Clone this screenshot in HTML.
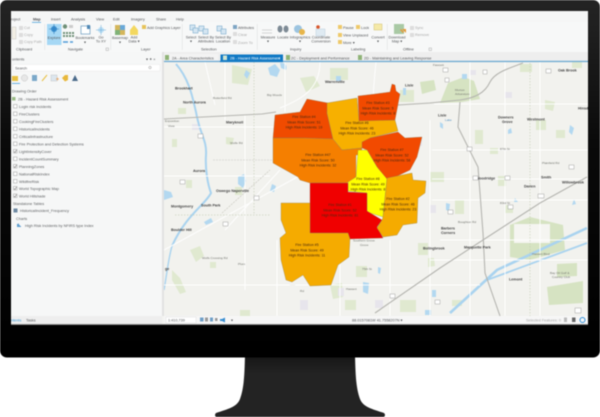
<!DOCTYPE html>
<html><head><meta charset="utf-8"><style>
html,body{margin:0;padding:0;background:#fff;width:600px;height:417px;overflow:hidden}
svg{display:block;position:absolute;left:0;top:0}
text{font-family:"Liberation Sans",sans-serif}
.ui{filter:blur(.6px)}
.t{font-size:3.8px;fill:#55575a}
.l{font-size:3.8px;fill:#5c5e60}
.m{font-size:3.1px;fill:#73756f}
.b{font-size:3.7px;fill:#444;font-weight:bold}
.f{font-size:3.6px;fill:#4a2a10;text-anchor:middle}
.c{text-anchor:middle}
.box{fill:#fff;stroke:#9a9a9a;stroke-width:.5}
.rd{fill:none;stroke:#fff;stroke-width:1}
.hw{fill:none;stroke:#b5b5b0;stroke-width:1.1}
.gr{fill:#e0e9d0}
.g2{fill:#d6e3c2}
.wa{fill:#b3d8f0}
</style></head><body>
<svg width="600" height="417" viewBox="0 0 600 417" xmlns="http://www.w3.org/2000/svg">
<defs>
<linearGradient id="bz" x1="0" y1="0" x2="0" y2="1"><stop offset="0" stop-color="#242424"/><stop offset=".1" stop-color="#1e1e1e"/><stop offset=".4" stop-color="#0a0a0a"/><stop offset="1" stop-color="#000"/></linearGradient>
<linearGradient id="st" x1="0" y1="0" x2="0" y2="1"><stop offset="0" stop-color="#161616"/><stop offset=".3" stop-color="#232323"/><stop offset="1" stop-color="#232323"/></linearGradient>
</defs>
<rect width="600" height="417" fill="#fff"/>
<path class="ui" d="M245 355H355C355.500 375 356 388 360 399C363 407 372 409 384 413Q386 415 384 417H216Q214 415 216 413C228 409 237 407 240 399C244 388 244.500 375 245 355Z" fill="url(#st)"/>
<rect class="ui" x="0" y="0" width="600" height="357.500" rx="7" fill="url(#bz)"/>

<g class="ui">
<!-- map -->
<rect x="11" y="11" width="577" height="313" fill="#f4f4f1"/>
<rect x="164" y="62" width="424" height="254" fill="#f2f2ee"/>
<g>
<!-- green patches -->
<path class="g2" d="M440 103l8-20 16-6 10 4 6 18-18 3zM420 82l14-2 2 10-14 4zM510 257V225l20-8 33 8 2 25-35 10zM547 287l36-6v22l-34 2zM557 264l20-1v13l-20 1z"/>
<rect x="514" y="224" width="36" height="19" fill="#f5f5f1"/>
<path class="gr" d="M300 78l14-2 6 10-14 6zM330 68h18v12h-18zM232 65l20 4-4 16-16-2zM178 108h8v6h-8zM172 139h5v8h-5zM226 137l8 1-2 7-6-1zM520 64h12v8h-12zM545 100l10 2-2 9-8-2zM556 130h9v8h-9zM536 120h10v10h-10zM455 200h9v14h-9zM430 172h14v10h-14zM498 176h8v10h-8zM475 130h8v14h-8zM490 148h8v6h-8zM505 205h8v8h-8zM418 243h10v12h-10zM356 266h11v11h-11zM345 300h11v10h-11zM400 300h16v12h-16zM330 285l12-2 1 14-10 2zM186 180h6v8h-6zM235 187h7v8h-7zM190 250l10-4 4 10-8 6zM172 270l8 8 6 14-6 2-8-14zM210 262h6v6h-6zM428 258l6 0 1 8-7 1zM240 310h10v6h-10zM452 300h10v6h-10zM400 90h14v12h-14zM572 60h10v8h-10z"/>
<!-- pale buildup -->
<path d="M192 124h8v6h-8zM300 300h8v10h-8zM338 288h6v8h-6zM375 300h8v8h-8zM470 70h6v5h-6zM505 92h7v6h-7zM414 138h8v8h-8zM430 205h6v8h-6z" fill="#e7e5ec"/>
<!-- water -->
<path d="M176 64C190 80 193 100 196 112C200 135 207 140 206 155C205 170 208 185 211 193C205 205 186 215 172 246" fill="none" stroke="#a9d3ef" stroke-width="2"/>
<path d="M172 246C168 260 166 280 164 290" fill="none" stroke="#a9d3ef" stroke-width="1.400"/>
<path class="wa" d="M164 190l7 2 2 5-9 3zM238 177l6-3 2 7-3 7-5-4zM268 68l7-4 5 6-3 7-7-2zM280 63c4-1 8 2 6 7l-5-2zM246 70l4 3-3 6-3-4zM336 76h5v5h-5zM272 184l4 2-2 6-4-1zM204 222l7-4 2 4-7 3zM462 74h5v5h-5zM403 88h3v7h-3zM363 282l6 1-1 11-5-2zM377 222l6 2-1 5-6-1zM446 203l4 1-1 7-3-1zM508 130l3-2 1 5-4 1zM570 125l4 3-2 7-3-3zM440 122l3 2v5l-3-2zM515 198l3 4h-4zM574 199l2 5-4 1zM378 267l3 1-1 6-2-1zM432 290h4v7h-4zM425 310h6v5h-6z"/>
<path d="M450 313L497 270L587 228" fill="none" stroke="#a9d3ef" stroke-width="2.600"/>
<path d="M487 280L587 243" fill="none" stroke="#a9d3ef" stroke-width="1.800"/>
<!-- white roads -->
<path class="rd" d="M285 62V112M320 62C320 90 300 100 280 108M164 127H290M205 62L215 105M225 62V120M164 176H270M245 115V290M277 240V316M225 230L280 170M164 250L310 170M376 62C372 100 372 120 372 160M340 240V316M390 240V316M430 120V316M470 62V316M505 62V316M540 62V316M434 104H588M432 150H588M432 179H588M432 200H588M440 240H588M164 285H290M295 285H480M430 260H588" stroke-opacity=".9"/>
<!-- highways -->
<path class="hw" d="M164 119L262 114L276 112M398 105L430 103L460 100C475 98 485 93 490 82C495 72 510 68 523 63M460 102L458 127L478 167L480 193L483 233L485 273L500 316"/>
<path class="hw" d="M375 313L440 268L483 240L540 203L587 177"/>
<path d="M222 213L270 170M213 160H290" fill="none" stroke="#c8c7bf" stroke-width=".6" stroke-dasharray="2 1"/>
<path d="M254 62V215M175 215H270M530 60V316" fill="none" stroke="#bbc5a9" stroke-width=".5" stroke-dasharray="1.500 1.500"/>
<!-- map labels -->
<text class="b" x="175" y="89.500">Brookhart</text>
<text class="b" x="183" y="103.500">North Aurora</text>
<text class="m" x="165" y="122">Exposition</text>
<text class="m" x="168" y="127">View</text>
<text class="b" x="226" y="123.500">Maryknoll</text>
<text class="b" x="193" y="172">Aurora</text>
<text class="b" x="171" y="207.500">Montgomery</text>
<text class="b" x="201" y="206.500">South Park</text>
<text class="b" x="216" y="192">Oswego Naperville</text>
<text class="b" x="171" y="231">Boulder Hill</text>
<text class="b" x="165" y="270">ge</text>
<text class="m" x="213" y="99">Butterfield Rd</text>
<text class="m" x="267" y="96">Big Woods</text>
<text class="m" x="230" y="144">Wolfe Rd</text>
<text class="m" x="202" y="259">Wolfs Crossing Rd</text>
<text class="m" x="238" y="265">Plum</text>
<text class="b" x="325" y="83">Warrenville</text>
<text class="b" x="405" y="86.500">Lisle</text>
<text class="m" x="433" y="66">Fawcett</text>
<text class="m" x="455" y="91">Morton</text>
<text class="m" x="455" y="95">Arboretum</text>
<text class="b" x="498" y="118.500">Downers</text>
<text class="b" x="502" y="123">Grove</text>
<text class="b" x="527" y="120.500">Westmont</text>
<text class="b" x="438" y="116.500">Lisle</text>
<text class="m" x="445" y="121" style="fill:#4f8fc0">Lake</text>
<text class="b" x="558" y="71.500">Oak Brook</text>
<text class="b" x="578" y="109.500">Hinsd</text>
<text class="b" x="476" y="179.500">Woodridge</text>
<text class="b" x="524" y="187.500">Darien</text>
<text class="b" x="562" y="183.500">Willowbrook</text>
<text class="b" x="541" y="178.500">Smith</text>
<text class="b" x="423" y="249.500">Bolingbrook</text>
<text class="b" x="464" y="248.500">Marquette Park</text>
<text class="b" x="441" y="229.500">Barbers</text>
<text class="b" x="441" y="234">Corners</text>
<text class="b" x="509" y="280.500">Lemont</text>
<text class="m" x="353" y="241.500">Southern Grove</text>
<text class="m" x="360" y="246">Grove</text>
<text class="m" x="532" y="255">Hassert Blvd</text>
<text class="m" x="550" y="274">Bay Oil Golf &amp;</text>
<text class="m" x="552" y="278">Country Club</text>
<text class="m" x="362" y="270">75th St</text>
<text class="m" x="346" y="290">Hassert</text>
<text class="m" x="300" y="292">Rd</text>
<text class="m" x="500" y="150">87th St</text>
<text class="m" x="542" y="164">Plainfield Rd</text>
<text class="m" x="500" y="204">83rd St</text>
<text class="m" x="458" y="223">Boughton Rd</text>
<!-- route shields -->
<g fill="#fff" stroke="#8d8d8d" stroke-width=".4">
<rect x="198" y="134" width="5" height="4"/><rect x="180" y="180" width="5" height="4"/><rect x="223" y="222" width="5" height="4"/><rect x="254" y="196" width="5" height="4"/><rect x="443" y="68" width="5" height="4"/><rect x="483" y="70" width="4" height="4"/><rect x="445" y="78" width="4" height="4"/><rect x="546" y="69" width="5" height="4"/><rect x="473" y="176" width="5" height="4"/><rect x="467" y="147" width="5" height="4"/><rect x="538" y="194" width="6" height="4"/><rect x="569" y="165" width="5" height="4"/><rect x="505" y="176" width="5" height="4"/><rect x="508" y="205" width="5" height="4"/><rect x="448" y="210" width="5" height="4"/><rect x="390" y="294" width="5" height="4"/><rect x="435" y="300" width="5" height="4"/><rect x="575" y="308" width="6" height="5"/></g>
<!-- polygons -->
<g stroke="#8a7a5a" stroke-width=".3">
<path fill="#f04b00" d="M275 115L300 112L307 99L328 103L327 113L333 139L303 138L273 138Z"/>
<path fill="#f7b000" d="M327 103L357 98L359 120L395 120L398 131L370 138L362 148L342 150L333 139L327 113Z"/>
<path fill="#f24a00" d="M358 96L375 94L390 92L392 84L395 85L396 91L400 94L395 120L359 121Z"/>
<path fill="#f57f00" d="M273 138L303 138L333 139L342 150L362 148L361 155L356 155L356 177L347 183L310 183L300 180L298 177L273 163Z"/>
<path fill="#f24a00" d="M362 142L370 138L398 132L405 138L422 137L417 157L410 170L387 181L377 167L367 150L362 148Z"/>
<path fill="#ffff00" d="M358 150L367 150L377 167L387 179L383 217L367 212L367 193L348 191L348 182L356 177Z"/>
<path fill="#f00000" d="M310 183L348 183L348 192L367 193L367 211L382 220L377 227L383 238L350 239L348 233L310 233Z"/>
<path fill="#f5ab00" d="M387 178L412 173L413 180L426 181L425 193L418 198L417 223L403 225L397 235L383 237L377 228L382 220L383 217Z"/>
<path fill="#f5ab00" d="M281 203H310V233L348 233L350 239L349 257L338 265L331 285L310 286L303 275L292 282L286 280L281 260L280 238L286 233L281 220Z"/>
</g>
<!-- polygon labels -->
<g>
<text class="f" x="304" y="118">Fire Station #4</text><text class="f" x="304" y="123.500">Mean Risk Score: 51</text><text class="f" x="304" y="128.500">High Risk Incidents: 19</text>
<text class="f" x="357" y="124">Fire Station #6</text><text class="f" x="357" y="129.500">Mean Risk Score: 46</text><text class="f" x="357" y="134.500">High Risk Incidents: 23</text>
<text class="f" x="378" y="104">Fire Station #3</text><text class="f" x="378" y="109.500">Mean Risk Score: 5</text><text class="f" x="378" y="114.500">High Risk Incidents: 8</text>
<text class="f" x="318" y="156">Fire Station #47</text><text class="f" x="318" y="161.500">Mean Risk Score: 50</text><text class="f" x="318" y="166.500">High Risk Incidents: 32</text>
<text class="f" x="392" y="151">Fire Station #7</text><text class="f" x="392" y="156.500">Mean Risk Score: 52</text><text class="f" x="392" y="161.500">High Risk Incidents: 58</text>
<text class="f" x="368" y="180">Fire Station #8</text><text class="f" x="368" y="185.500">Mean Risk Score: 49</text><text class="f" x="368" y="190.500">High Risk Incidents: 8</text>
<text class="f" x="340" y="206">Fire Station #1</text><text class="f" x="340" y="211.500">Mean Risk Score: 52</text><text class="f" x="340" y="216.500">High Risk Incidents: 81</text>
<text class="f" x="398" y="200">Fire Station #2</text><text class="f" x="398" y="205.500">Mean Risk Score: 46</text><text class="f" x="398" y="210.500">High Risk Incidents: 23</text>
<text class="f" x="307" y="246">Fire Station #5</text><text class="f" x="307" y="251.500">Mean Risk Score: 49</text><text class="f" x="307" y="256.500">High Risk Incidents: 11</text>
</g>

<!-- ribbon -->
<rect x="11" y="11" width="577" height="11" fill="#f5f6f6"/>
<rect x="11" y="22" width="577" height="30" fill="#f7f8f8"/>
<rect x="11" y="52" width="577" height="10" fill="#eeeeee"/>
<text class="t" x="11" y="20.500">roject</text>
<text class="t" x="33" y="20.500" style="font-weight:bold">Map</text><rect x="32" y="22" width="9" height=".7" fill="#3b9ad8"/>
<text class="t" x="51" y="20.500">Insert</text><text class="t" x="71" y="20.500">Analysis</text><text class="t" x="96" y="20.500">View</text><text class="t" x="113" y="20.500">Edit</text><text class="t" x="131" y="20.500">Imagery</text><text class="t" x="156" y="20.500">Share</text><text class="t" x="176" y="20.500">Help</text>
<!-- clipboard -->
<path d="M12 27h4v12h-4z" fill="#f2efe4" stroke="#bbb" stroke-width=".4"/>
<text class="t" x="24" y="29" style="fill:#aaa">Cut</text><text class="t" x="24" y="36" style="fill:#aaa">Copy</text><text class="t" x="24" y="43" style="fill:#aaa">Copy Path</text>
<text class="t" x="16" y="50.500">Clipboard</text>
<g fill="#ddd"><rect x="19" y="26" width="4" height="4"/><rect x="19" y="33" width="4" height="4"/><rect x="19" y="40" width="4" height="4"/></g>
<rect x="44.500" y="24" width=".5" height="26" fill="#ddd"/>
<!-- navigate -->
<rect x="47" y="24" width="14.500" height="21" fill="#a6d8f5"/>
<circle cx="54" cy="29" r="3" fill="#3c8fcf"/><path d="M54 24v10M49 29h10" stroke="#2c7fbf" stroke-width=".6"/>
<text class="t c" x="54" y="39">Explore</text>
<g fill="#6e8f77"><circle cx="65" cy="26.500" r="2.200"/><rect x="69" y="25" width="4" height="3" fill="#ccc"/><rect x="63" y="32" width="2" height="2"/><rect x="66" y="32" width="2" height="2"/><rect x="69" y="32" width="2" height="2"/><rect x="72" y="32" width="2" height="2"/><rect x="63" y="35" width="2" height="2"/><rect x="66" y="35" width="2" height="2"/><rect x="69" y="35" width="2" height="2"/><rect x="72" y="35" width="2" height="2"/></g>
<path d="M63 42h5M70 42h3" stroke="#4f9bd8" stroke-width="1.400"/>
<rect x="81" y="26" width="9" height="8" fill="#fff" stroke="#4f88b5" stroke-width=".6"/><rect x="87" y="25" width="3" height="4" fill="#4f88b5"/>
<text class="t c" x="85" y="39">Bookmarks</text><text class="t c" x="85" y="43.500">▾</text>
<circle cx="101" cy="30" r="3" fill="#bfe1f5"/><path d="M101 25v10M96 30h10" stroke="#6aa9d8" stroke-width=".5"/>
<text class="t c" x="101" y="38.500">Go</text><text class="t c" x="101" y="42.500">To XY</text>
<text class="t" x="68" y="50.500">Navigate</text>
<rect x="106" y="48" width="2.500" height="2.500" fill="none" stroke="#999" stroke-width=".4"/>
<rect x="110.500" y="24" width=".5" height="26" fill="#ddd"/>
<!-- layer -->
<rect x="115" y="25" width="10" height="10" fill="#d4b65b"/><rect x="120" y="25" width="5" height="5" fill="#6aa9d8"/><rect x="115" y="30" width="5" height="5" fill="#7fb277"/>
<text class="t c" x="120" y="39">Basemap</text><text class="t c" x="120" y="43.500">▾</text>
<path d="M130 30l4-5 4 5v5h-8z" fill="#f3d860"/>
<text class="t c" x="134" y="38.500">Add</text><text class="t c" x="134" y="42.500">Data ▾</text>
<rect x="142" y="25" width="4" height="4" fill="#e6c35a"/><text class="t" x="147" y="29">Add Graphics Layer</text>
<text class="t" x="141" y="50.500">Layer</text>
<rect x="182" y="24" width=".5" height="26" fill="#ddd"/>
<!-- selection -->
<g fill="#d5e6f2" stroke="#6aa0c4" stroke-width=".5"><rect x="190" y="25" width="5" height="5"/><rect x="193" y="28" width="5" height="5"/><rect x="199" y="26" width="5" height="5"/><rect x="203" y="29" width="5" height="5"/><rect x="217" y="26" width="5" height="5"/><rect x="221" y="29" width="5" height="5"/></g>
<text class="t c" x="191" y="38.500">Select</text><text class="t c" x="191" y="42.500">▾</text>
<text class="t c" x="206" y="38.500">Select By</text><text class="t c" x="206" y="42.500">Attributes</text>
<text class="t c" x="223" y="38.500">Select By</text><text class="t c" x="223" y="42.500">Location</text>
<rect x="233" y="25" width="4" height="4" fill="#7ea5c4"/><text class="t" x="238" y="29">Attributes</text>
<rect x="233" y="32" width="4" height="4" fill="#ddd"/><text class="t" x="238" y="36" style="fill:#aaa">Clear</text>
<rect x="233" y="40" width="4" height="4" fill="#ddd"/><text class="t" x="238" y="44" style="fill:#aaa">Zoom To</text>
<text class="t" x="201" y="50.500">Selection</text>
<rect x="257" y="24" width=".5" height="26" fill="#ddd"/>
<!-- inquiry -->
<path d="M262 30h10M262 33h10" stroke="#c9c9c9" stroke-width=".8"/><text class="t c" x="268" y="38.500">Measure</text><text class="t c" x="268" y="42.500">▾</text>
<ellipse cx="280" cy="29" rx="2.500" ry="3.500" fill="#7d8a95"/><ellipse cx="286" cy="29" rx="2.500" ry="3.500" fill="#7d8a95"/><text class="t c" x="283" y="38.500">Locate</text>
<circle cx="298" cy="29" r="4" fill="#9cc4e0"/><circle cx="302" cy="32" r="3" fill="#e7b54a"/><text class="t c" x="300" y="38.500">Infographics</text><text class="t c" x="300" y="42.500">▾</text>
<circle cx="318" cy="27" r="1.800" fill="#d8552a"/><rect x="316" y="29" width="9" height="7" fill="#dfeaf2" stroke="#9db7cc" stroke-width=".3"/><text class="t c" x="321" y="38.500">Coordinate</text><text class="t c" x="321" y="42.500">Conversion</text>
<text class="t" x="290" y="50.500">Inquiry</text>
<rect x="387" y="24" width=".5" height="26" fill="#ddd"/>
<!-- labeling -->
<g fill="#eec96a"><rect x="338" y="25" width="4" height="4"/><rect x="356" y="25" width="4" height="4"/><rect x="338" y="33" width="4" height="4"/><rect x="338" y="40" width="4" height="4"/></g>
<text class="t" x="343" y="29">Pause</text><text class="t" x="361" y="29">Lock</text><text class="t" x="343" y="36.500">View Unplaced</text><text class="t" x="343" y="44">More ▾</text>
<rect x="374" y="24" width="8" height="6" fill="#f5e9a8" stroke="#c9b35a" stroke-width=".4"/><text class="t c" x="378" y="38.500">Convert</text><text class="t c" x="378" y="42.500">▾</text>
<text class="t" x="351" y="50.500">Labeling</text>
<!-- offline -->
<rect x="394" y="24" width="10" height="10" fill="#a9c9a4"/><path d="M400 30l3 3 1-1-3-3zM402 29h4v4" fill="#e59a3a"/>
<text class="t c" x="397" y="38.500">Download</text><text class="t c" x="397" y="42.500">Map ▾</text>
<rect x="410" y="26" width="4" height="4" fill="#ddd"/><text class="t" x="415" y="29" style="fill:#aaa">Sync</text><rect x="410" y="33" width="4" height="4" fill="#ddd"/><text class="t" x="415" y="36" style="fill:#aaa">Remove</text>
<text class="t" x="403" y="50.500">Offline</text>
<rect x="429" y="48" width="2.500" height="2.500" fill="none" stroke="#999" stroke-width=".4"/>
<!-- view tabs -->
<rect x="164" y="54" width="54" height="7" fill="#f3f3f3"/><rect x="165" y="55" width="4" height="5" fill="#8fb377"/><text class="t" x="172" y="59.500">2A - Area Characteristics</text>
<rect x="220.500" y="54.500" width="62.500" height="6.500" fill="#0f78c4"/><rect x="223" y="55.500" width="4" height="4.500" fill="#d0e4d0"/><text class="t" x="230" y="59.500" style="fill:#fff">2B - Hazard Risk Assessment</text><text class="t" x="278" y="59.500" style="fill:#fff">×</text>
<rect x="286" y="55" width="4" height="5" fill="#8fb377"/><text class="t" x="291" y="59.500">2C - Deployment and Performance</text>
<rect x="358" y="55" width="4" height="5" fill="#8fb377"/><text class="t" x="364" y="59.500">2D - Maintaining and Leaving Response</text>
<rect x="164" y="60.800" width="424" height="1.300" fill="#6ca9d2"/>
<rect x="220" y="60.800" width="63" height="1.300" fill="#0f78c4"/>
<!-- contents -->
<rect x="11" y="52" width="151" height="264" fill="#f6f7f7"/>
<rect x="162" y="52" width="2" height="264" fill="#e2e2e2"/>
<text class="t" x="12" y="60.500">ontents</text>
<text class="t" x="146" y="60.500">▾ ✦ ×</text>
<rect x="13" y="64.500" width="147" height="6.500" fill="#fff" stroke="#ddd" stroke-width=".3"/><text class="t" x="15" y="69.300">Search</text>
<circle cx="150" cy="67.500" r="1.200" fill="none" stroke="#777" stroke-width=".4"/>
<!-- contents icons -->
<rect x="12" y="76" width="6" height="5" fill="#e8c042"/>
<circle cx="24.500" cy="78" r="3.200" fill="#e7e7e7" stroke="#aaa" stroke-width=".3"/>
<rect x="32" y="75" width="5" height="6" fill="#7ba8c9"/>
<path d="M42 81l5-6" stroke="#e8c042" stroke-width="1"/>
<rect x="51" y="75" width="6" height="6" fill="#dce6ee" stroke="#aaa" stroke-width=".3"/><path d="M56 79h3M57.500 77.500v3" stroke="#e88a2a" stroke-width=".5"/>
<path d="M62 78l3-3h3v5l-3 1.500z" fill="#e8b83c"/>
<path d="M72 81l3-6 3 6z" fill="#4a6a8a"/>
<rect x="12" y="83" width="8" height=".8" fill="#49a0dc"/>
<text class="l" x="12" y="92.500">Drawing Order</text>
<rect x="12" y="97" width="3.500" height="3.500" fill="#9bbb88"/>
<text class="l" x="18" y="100.500">2B - Hazard Risk Assessment</text>
<g>
<rect class="box" x="13.500" y="104.500" width="3.500" height="3.500"/><text class="l" x="19" y="108">Login risk incidents</text>
<rect class="box" x="13.500" y="112" width="3.500" height="3.500"/><text class="l" x="19" y="115.500">FireClusters</text>
<rect class="box" x="13.500" y="119.500" width="3.500" height="3.500"/><text class="l" x="19" y="123">CookingFireClusters</text>
<rect class="box" x="13.500" y="127" width="3.500" height="3.500"/><text class="l" x="19" y="130.500">HistoricalIncidents</text>
<rect class="box" x="13.500" y="134.500" width="3.500" height="3.500"/><text class="l" x="19" y="138">CriticalInfrastructure</text>
<rect class="box" x="13.500" y="142" width="3.500" height="3.500"/><text class="l" x="19" y="145.500">Fire Protection and Detection Systems</text>
<rect class="box" x="13.500" y="149.500" width="3.500" height="3.500"/><path d="M14 151.500l1 1 1.500-2.500" fill="none" stroke="#444" stroke-width=".5"/><text class="l" x="19" y="153">LightIntensityCover</text>
<rect class="box" x="13.500" y="157" width="3.500" height="3.500"/><text class="l" x="19" y="160.500">IncidentCountSummary</text>
<rect class="box" x="13.500" y="164.500" width="3.500" height="3.500"/><path d="M14 166.500l1 1 1.500-2.500" fill="none" stroke="#444" stroke-width=".5"/><text class="l" x="19" y="168">PlanningZones</text>
<rect class="box" x="13.500" y="172" width="3.500" height="3.500"/><text class="l" x="19" y="175.500">NationalRiskIndex</text>
<rect class="box" x="13.500" y="179.500" width="3.500" height="3.500"/><text class="l" x="19" y="183">WildfireRisk</text>
<rect class="box" x="13.500" y="186.500" width="3.500" height="3.500"/><path d="M14 188.500l1 1 1.500-2.500" fill="none" stroke="#444" stroke-width=".5"/><text class="l" x="19" y="190">World Topographic Map</text>
<rect class="box" x="13.500" y="194" width="3.500" height="3.500"/><path d="M14 196l1 1 1.500-2.500" fill="none" stroke="#444" stroke-width=".5"/><text class="l" x="19" y="197.500">World Hillshade</text>
</g>
<text class="l" x="13" y="204.800">Standalone Tables</text>
<rect x="13.500" y="208.500" width="4" height="4" fill="#6f8aa3"/><text class="l" x="20" y="212">HistoricalIncident_Frequency</text>
<text class="l" x="16" y="219.800">Charts</text>
<path d="M17 224v3h4v-1h-1v-1h-1v-1.500z" fill="#5f9fd0"/><text class="l" x="25" y="227.200">High Risk Incidents by NFIRS type Index</text>
<!-- status -->
<rect x="11" y="316" width="151" height="8" fill="#eeeeee"/>
<rect x="164" y="316" width="424" height="8" fill="#f6f6f6"/>
<text class="t" x="11" y="321.500" style="fill:#3b9ad8">ntents</text><text class="t" x="26" y="321.500">Tasks</text>
<rect x="166" y="317" width="30" height="6" fill="#fff" stroke="#ccc" stroke-width=".3"/><text class="t" x="168" y="321.500">1:410,739</text>
<g fill="#6f9fc6"><rect x="200" y="317.500" width="3.500" height="4"/><rect x="205" y="317.500" width="3" height="4" fill="#999"/><rect x="210" y="317.500" width="3" height="4"/><rect x="215" y="318" width="2.500" height="3" fill="#999"/><path d="M225 317.500v5l-3-1.500h-2v-2h2z" fill="#3b8fd0"/></g>
<text class="t" x="231" y="321.500">▾</text>
<text class="t" x="352" y="321.500">88.0157081W 41.7558207N ▾</text>
<text class="t" x="526" y="321.500" style="fill:#a8a8a8">Selected Features: 0</text>
<rect x="564" y="317.500" width="3" height="4.500" fill="#bbb"/><rect x="572" y="317.500" width="3.500" height="4.500" fill="#666"/><circle cx="582.500" cy="320" r="2.500" fill="none" stroke="#2f8ed6" stroke-width="1"/>
<rect x="11" y="324" width="577" height="1" fill="#888"/>
</g>
</g>
</svg>
</body></html>
